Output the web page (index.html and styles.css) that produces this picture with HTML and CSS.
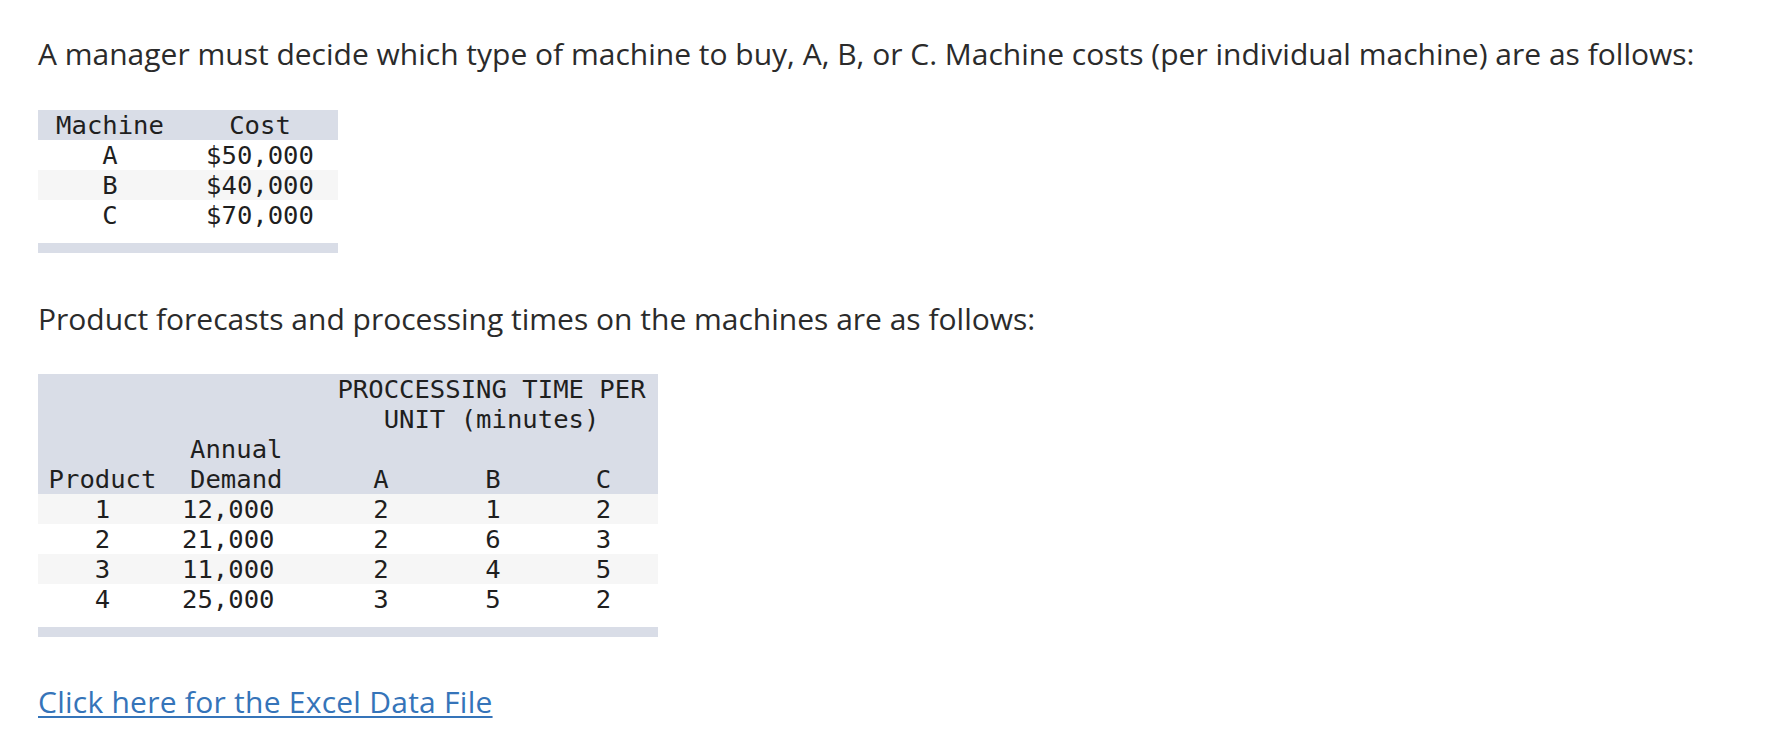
FILE: index.html
```html
<!DOCTYPE html>
<html>
<head>
<meta charset="utf-8">
<link rel="stylesheet" href="styles.css">
</head>
<body>
<div class="page">
  <p class="intro first">A manager must decide which type of machine to buy, A, B, or C. Machine costs (per individual machine) are as follows:</p>

  <div class="data cost">
    <table>
      <colgroup><col class="c-machine"><col class="c-cost"></colgroup>
      <thead>
        <tr><th>Machine</th><th>Cost</th></tr>
      </thead>
      <tbody>
        <tr><td>A</td><td>$50,000</td></tr>
        <tr class="alt"><td>B</td><td>$40,000</td></tr>
        <tr><td>C</td><td>$70,000</td></tr>
      </tbody>
    </table>
    <div class="bar"></div>
  </div>

  <p class="intro second">Product forecasts and processing times on the machines are as follows:</p>

  <div class="data forecast">
    <table>
      <colgroup><col class="c-prod"><col class="c-dem"><col class="c-m"><col class="c-m"><col class="c-mc"></colgroup>
      <thead>
        <tr class="h-top">
          <th rowspan="2" class="bottom">Product</th>
          <th rowspan="2" class="bottom demand">Annual<br>Demand</th>
          <th colspan="3" class="proc">PROCCESSING TIME PER<br>UNIT (minutes)</th>
        </tr>
        <tr><th>A</th><th>B</th><th>C</th></tr>
      </thead>
      <tbody>
        <tr class="alt"><td>1</td><td class="num">12,000</td><td>2</td><td>1</td><td>2</td></tr>
        <tr><td>2</td><td class="num">21,000</td><td>2</td><td>6</td><td>3</td></tr>
        <tr class="alt"><td>3</td><td class="num">11,000</td><td>2</td><td>4</td><td>5</td></tr>
        <tr><td>4</td><td class="num">25,000</td><td>3</td><td>5</td><td>2</td></tr>
      </tbody>
    </table>
    <div class="bar"></div>
  </div>

  <p class="intro linkline"><a href="#" class="excel">Click here for the Excel Data File</a></p>
</div>
</body>
</html>
```

FILE: styles.css
```css
html, body {
  margin: 0;
  padding: 0;
  background: #ffffff;
}

.page {
  padding: 36px 0 0 38px;
  font-family: "Open Sans", Lato, sans-serif;
  color: #2b2b2b;
}

.intro {
  margin: 0;
  font-size: 30px;
  line-height: 36px;
  white-space: nowrap;
}

.intro.first { margin-bottom: 38px; }
.intro.second { margin-top: 48px; margin-bottom: 37px; }
.intro.linkline { margin-top: 47px; }

.excel {
  color: #3574b9;
  letter-spacing: 0.25px;
  text-decoration: underline;
  text-underline-offset: 3px;
  text-decoration-thickness: 2px;
}

.data table {
  border-collapse: collapse;
  table-layout: fixed;
  font-family: "DejaVu Sans Mono", "Liberation Mono", monospace;
  font-size: 25.6px;
  line-height: 30px;
  color: #1f1f1f;
}

.data th,
.data td {
  padding: 0;
  font-weight: normal;
  text-align: center;
  white-space: nowrap;
}

.data thead th {
  background: #d9dde7;
}

.data tr.alt td {
  background: #f6f6f6;
}

.bar {
  height: 10px;
  margin-top: 13px;
  background: #d9dde7;
}

.cost { width: 300px; }
.cost table { width: 300px; }
.c-machine { width: 144px; }
.c-cost { width: 156px; }

.forecast { width: 620px; }
.forecast table { width: 620px; }
.c-prod { width: 129px; }
.c-dem { width: 158px; }
.c-m { width: 112px; }
.c-mc { width: 109px; }

.forecast .h-top { height: 90px; }
.forecast th.bottom { vertical-align: bottom; }
.forecast th.demand { text-align: left; padding-left: 23px; }
.forecast td.num { text-align: left; padding-left: 15px; }
.forecast th.proc { vertical-align: top; padding-left: 0; }
```
